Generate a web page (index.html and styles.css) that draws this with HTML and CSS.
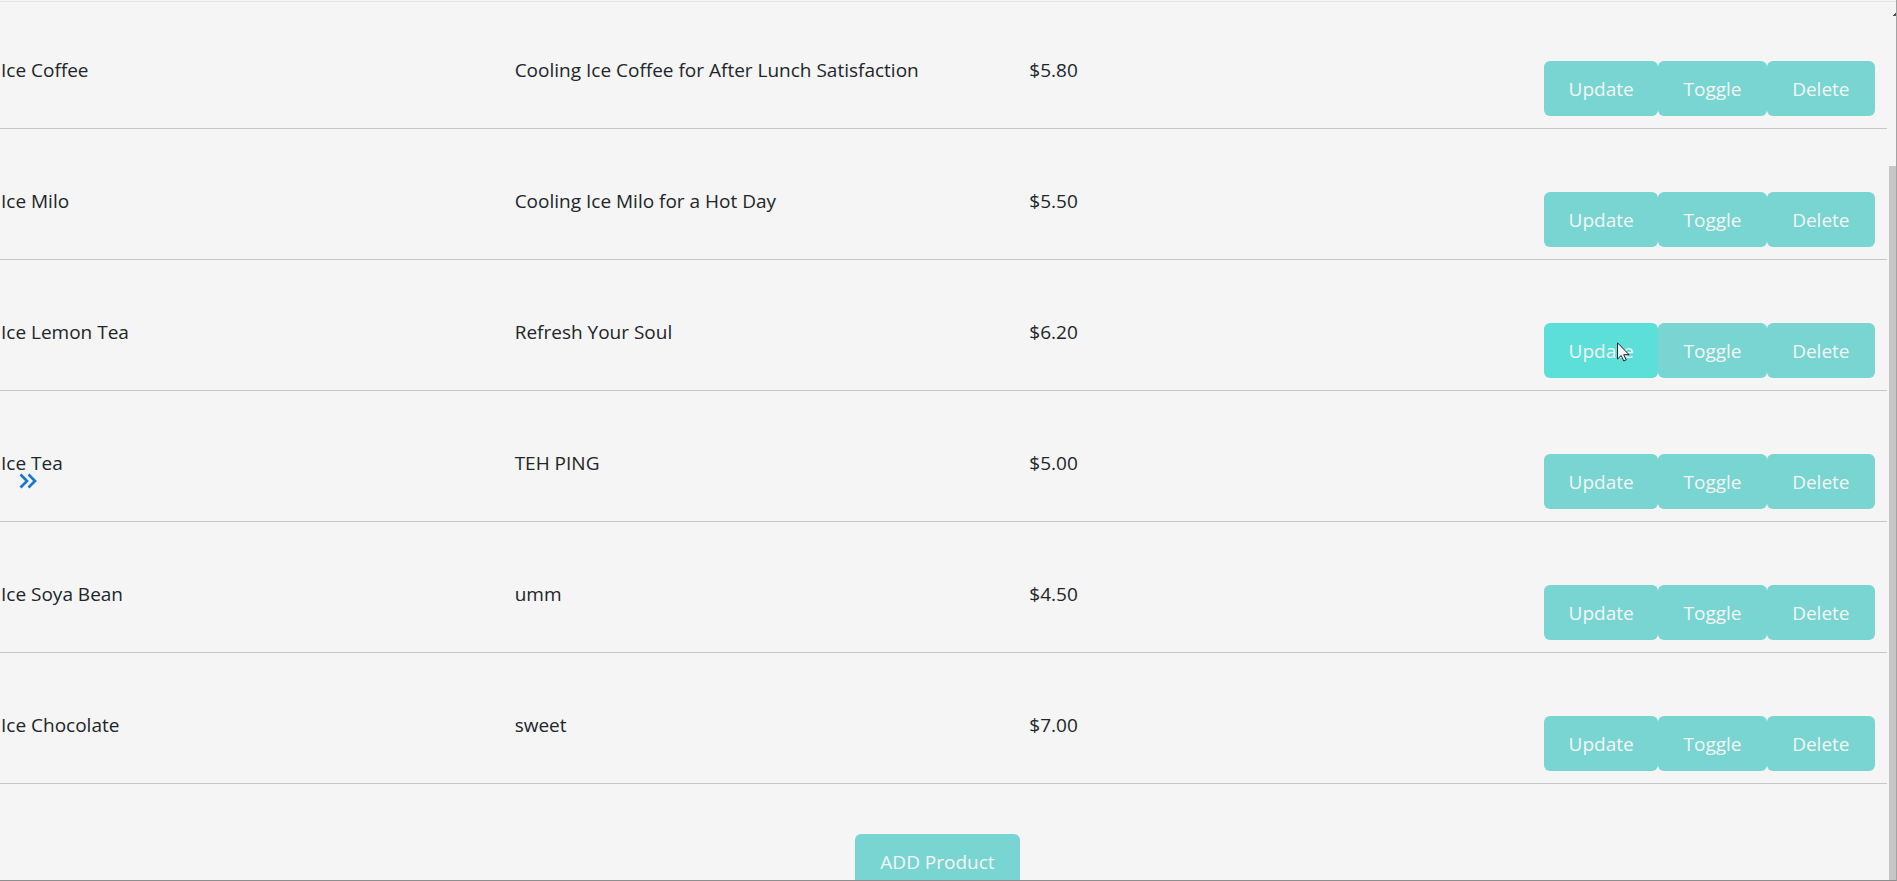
FILE: index.html
```html
<!DOCTYPE html>
<html lang="en">
<head>
<meta charset="utf-8">
<title>Products</title>
<link rel="stylesheet" href="styles.css">
</head>
<body>
<div class="window">
  <main class="page">
    <table class="products">
      <colgroup><col><col><col><col class="actions-col"></colgroup>
      <tbody>
        <tr><td class="name">Ice Coffee</td><td>Cooling Ice Coffee for After Lunch Satisfaction</td><td>$5.80</td>
          <td class="actions"><div class="group"><button class="btn update">Update</button><button class="btn">Toggle</button><button class="btn">Delete</button></div></td></tr>
        <tr><td class="name">Ice Milo</td><td>Cooling Ice Milo for a Hot Day</td><td>$5.50</td>
          <td class="actions"><div class="group"><button class="btn update">Update</button><button class="btn">Toggle</button><button class="btn">Delete</button></div></td></tr>
        <tr><td class="name">Ice Lemon Tea</td><td>Refresh Your Soul</td><td>$6.20</td>
          <td class="actions"><div class="group"><button class="btn update active">Update<svg class="cursor" width="13" height="20" viewBox="0 0 13 20" aria-hidden="true"><path d="M.5 .8V17l3.700-3.500 2.600 5.500 2.400-1.100-2.500-5.200H12z" fill="#f5f5f5" stroke="#17242b"/></svg></button><button class="btn">Toggle</button><button class="btn">Delete</button></div></td></tr>
        <tr><td class="name">Ice Tea</td><td>TEH PING</td><td>$5.00</td>
          <td class="actions"><div class="group"><button class="btn update">Update</button><button class="btn">Toggle</button><button class="btn">Delete</button></div></td></tr>
        <tr><td class="name">Ice Soya Bean</td><td>umm</td><td>$4.50</td>
          <td class="actions"><div class="group"><button class="btn update">Update</button><button class="btn">Toggle</button><button class="btn">Delete</button></div></td></tr>
        <tr><td class="name">Ice Chocolate</td><td>sweet</td><td>$7.00</td>
          <td class="actions"><div class="group"><button class="btn update">Update</button><button class="btn">Toggle</button><button class="btn">Delete</button></div></td></tr>
      </tbody>
    </table>
    <div class="footer"><button class="btn add">ADD Product</button></div>
  </main>
  <div class="scrollbar" aria-hidden="true">
    <svg class="arrow" width="3" height="3" viewBox="0 0 3 3"><path d="M0 3V2H1V1H2V0H3V3z" fill="#505050"/></svg>
    <div class="thumb"></div>
  </div>
  <button class="expand" aria-label="Expand sidebar">
    <svg width="18" height="16" viewBox="0 0 18 16"><path d="M1.500 1.500L8 8L1.500 14.500M9.500 1.500L16 8L9.500 14.500" fill="none" stroke="#1976d2" stroke-width="2.700"/></svg>
  </button>
</div>
</body>
</html>
```
FILE: styles.css
```css
* { box-sizing: border-box; }

body {
  margin: 0;
  background: #f5f5f5;
  color: #212529;
  font-family: "Segoe UI", "Open Sans", "Noto Sans", sans-serif;
  font-size: 19px;
  line-height: 30px;
}

.window {
  position: relative;
  display: flex;
  height: 100vh;
  overflow: hidden;
  border-right: 1px solid #a3a3a3;
  border-bottom: 1px solid #8e8e8e;
}

.window::before {
  content: "";
  position: absolute;
  inset: 1px 0 auto;
  height: 1px;
  background: #e2e2e2;
}

.page {
  flex: 1;
  min-width: 0;
  margin-top: -2px;
}

.products {
  width: 100%;
  table-layout: fixed;
  border-collapse: separate;
  border-spacing: 0;
}

.actions-col { width: 343px; }

.products td {
  height: 131px;
  padding: 57px 0 0;
  vertical-align: top;
  border-bottom: 1px solid #c6c6c6;
}

.products .name { padding-left: 1px; }

.products .actions { padding: 63px 12px 12px 0; }

.group { display: flex; }

.btn {
  flex: 1 1 108px;
  height: 55px;
  padding: 0;
  border: 0;
  border-radius: 6px;
  background: #78d5d1;
  color: #f5f5f5;
  font: inherit;
}

.update { flex-basis: 114px; }

.active {
  position: relative;
  background: #5cdfd9;
}

.cursor {
  position: absolute;
  left: 73px;
  top: 19px;
}

.footer {
  display: flex;
  justify-content: center;
  padding: 50px 12px 0 0;
}

.add {
  flex: 0 0 165px;
  height: 56px;
}

.scrollbar {
  display: flex;
  flex-direction: column;
  align-items: flex-end;
  width: 7px;
  margin-left: 2px;
}

.arrow {
  display: block;
  flex: none;
  margin: 13px 0 150px;
}

.thumb {
  flex: 1;
  width: 100%;
  background: #c6c6c6;
}

.expand {
  position: absolute;
  left: 19px;
  top: 473px;
  padding: 0;
  border: 0;
  background: none;
  line-height: 0;
}
```
